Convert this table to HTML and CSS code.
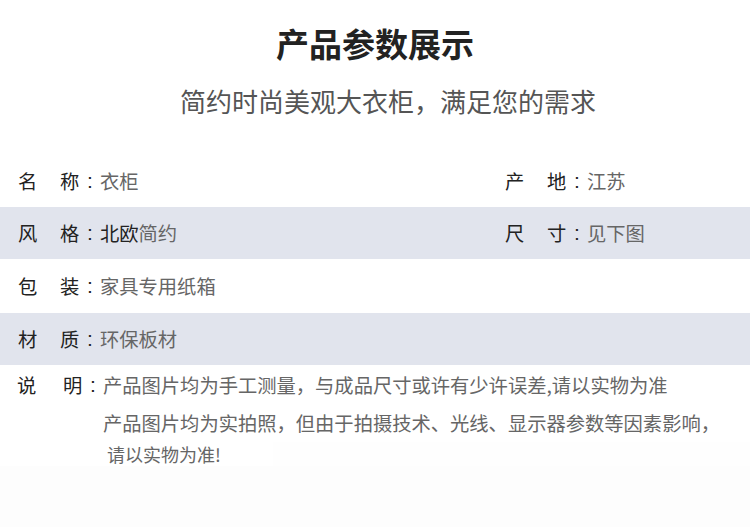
FILE: index.html
```html
<!DOCTYPE html>
<html lang="zh">
<head>
<meta charset="utf-8">
<title>产品参数展示</title>
<link rel="stylesheet" href="styles.css">
</head>
<body>
<div class="page">
  <header class="head">
    <h1 class="title">产品参数展示</h1>
    <p class="subtitle">简约时尚美观大衣柜，满足您的需求</p>
  </header>
  <section class="params">
    <div class="row row-first">
      <div class="cell"><span class="k1">名</span><span class="k2">称</span><span class="colon">:</span><span class="val">衣柜</span></div>
      <div class="cell cell-right"><span class="k1">产</span><span class="k2">地</span><span class="colon">:</span><span class="val">江苏</span></div>
    </div>
    <div class="row band">
      <div class="cell"><span class="k1">风</span><span class="k2">格</span><span class="colon">:</span><span class="val"><span class="dark">北欧</span>简约</span></div>
      <div class="cell cell-right"><span class="k1">尺</span><span class="k2">寸</span><span class="colon">:</span><span class="val">见下图</span></div>
    </div>
    <div class="row row-tall">
      <div class="cell"><span class="k1">包</span><span class="k2">装</span><span class="colon">:</span><span class="val">家具专用纸箱</span></div>
    </div>
    <div class="row band">
      <div class="cell"><span class="k1">材</span><span class="k2">质</span><span class="colon">:</span><span class="val">环保板材</span></div>
    </div>
  </section>
  <section class="note">
    <div class="note-line"><span class="k1">说</span><span class="k2 k2-wide">明</span><span class="colon">:</span><span class="val">产品图片均为手工测量，与成品尺寸或许有少许误差,请以实物为准</span></div>
    <p class="note-more">产品图片均为实拍照，但由于拍摄技术、光线、显示器参数等因素影响，</p>
    <p class="note-last">请以实物为准!</p>
  </section>
  <div class="tail"></div>
</div>
</body>
</html>
```

FILE: styles.css
```css
* { box-sizing: border-box; }
html, body { margin: 0; padding: 0; }
body {
  background: #ffffff;
  font-family: "Noto Sans CJK SC", "Noto Sans", sans-serif;
  width: 750px;
  height: 527px;
  overflow: hidden;
}
.page { width: 750px; }
.head { text-align: center; padding-top: 22px; }
.title {
  margin: 0;
  font-size: 33px;
  line-height: 42px;
  font-weight: 700;
  color: #222;
}
.subtitle {
  margin: 20px 0 0;
  padding-left: 26px;
  font-size: 26px;
  line-height: 34px;
  color: #555;
}
.params { margin-top: 37px; }
.row {
  display: flex;
  align-items: center;
  height: 52px;
  font-size: 19.3px;
}
.row-tall { height: 54px; }
.band { background: #e1e4ed; }
.cell {
  display: flex;
  align-items: center;
  width: 505px;
  padding-left: 18px;
}
.cell-right { width: 245px; padding-left: 0; }
.k1, .k2 { color: #222; width: 20px; display: inline-block; }
.k2 { margin-left: 22px; }
.colon {
  color: #222;
  width: 20px;
  display: inline-block;
  text-align: center;
  font-size: 21px;
  font-family: "Liberation Sans", sans-serif;
}
.val { color: #666; }
.dark { color: #222; }
.note { padding: 7px 0 0 17px; font-size: 19.3px; }
.note-line { display: flex; align-items: center; height: 26px; }
.note .k2-wide { margin-left: 26px; }
.note-more {
  margin: 12px 0 0 86px;
  line-height: 26px;
  color: #666;
  white-space: nowrap;
}
.note-last {
  margin: 6px 0 0 90px;
  font-size: 18px;
  line-height: 24px;
  color: #666;
  background: linear-gradient(to right, #fff 166px, #fefefe 166px);
}
.tail { height: 70px; background: #fdfdfd; }
```
